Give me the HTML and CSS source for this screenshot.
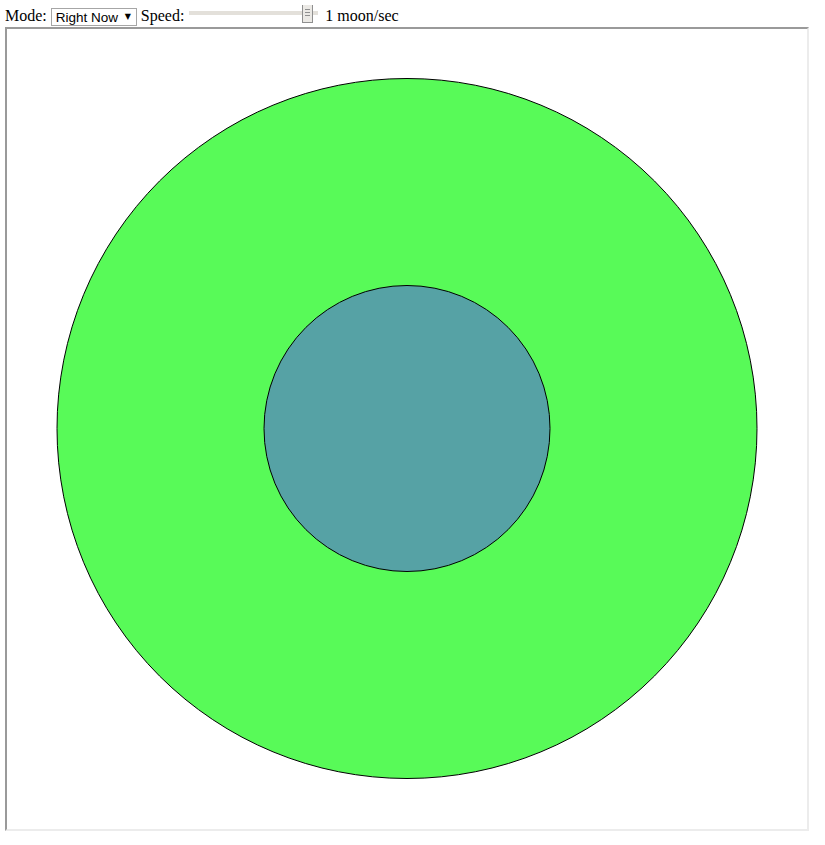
FILE: index.html
```html
<!DOCTYPE html>
<html>
<head>
<meta charset="utf-8">
<link rel="stylesheet" href="styles.css">
</head>
<body>
<div class="controls">
  <span class="label">Mode:</span>
  <span class="select-wrap">
    <select class="mode"><option>Right Now</option></select>
    <span class="arrow">▼</span>
  </span>
  <span class="label">Speed:</span>
  <span class="slider">
    <span class="track"></span>
    <span class="thumb"><i></i><i></i><i></i></span>
  </span>
  <span class="label rate">1 moon/sec</span>
</div>
<div class="stage">
  <svg width="800" height="800" viewBox="0 0 800 800">
    <circle cx="400" cy="399.5" r="350" fill="#58fa58" stroke="#000" stroke-width="1"/>
    <circle cx="400" cy="399.5" r="143" fill="#56a2a5" stroke="#000" stroke-width="1"/>
  </svg>
</div>
</body>
</html>
```
FILE: styles.css
```css
html, body { background: #fff; }
body {
  margin: 5px;
  font-family: "Liberation Serif", "Times New Roman", serif;
  font-size: 16px;
  color: #000;
}
.controls {
  display: flex;
  align-items: center;
  height: 22px;
}
.label { line-height: 22px; }
.select-wrap {
  position: relative;
  display: inline-block;
  margin-left: 4px;
  margin-right: 4px;
  height: 18px;
  margin-top: 2px;
}
.mode {
  appearance: none;
  -webkit-appearance: none;
  width: 86px;
  height: 18px;
  border: 1px solid #a6a6a6;
  border-radius: 0;
  background: #fff;
  font-family: "Liberation Sans", Arial, sans-serif;
  font-size: 13.5px;
  padding: 1px 0 0 4px;
  margin: 0;
  color: #000;
  display: block;
}
.arrow {
  position: absolute;
  right: 6px;
  top: 3px;
  font-size: 8px;
  line-height: 12px;
  font-family: "DejaVu Sans", sans-serif;
  pointer-events: none;
}
.slider {
  position: relative;
  display: inline-block;
  width: 129px;
  height: 22px;
  margin-left: 5px;
  margin-right: 7px;
}
.track {
  position: absolute;
  left: 0;
  right: 0;
  top: 6px;
  height: 4px;
  background: #e3e0da;
}
.thumb {
  position: absolute;
  left: 113px;
  top: -3px;
  width: 9px;
  height: 19px;
  border: 1px solid #8f8f8f;
  background: #ebe9e5;
  display: flex;
  flex-direction: column;
  justify-content: center;
  align-items: center;
  gap: 2px;
}
.thumb i {
  display: block;
  width: 5px;
  height: 1px;
  background: #8f8f8f;
}
.stage {
  width: 800px;
  height: 800px;
  border-style: solid;
  border-width: 2px;
  border-top-color: #9a9a9a;
  border-left-color: #9a9a9a;
  border-right-color: #ececec;
  border-bottom-color: #ececec;
}
.stage svg { display: block; }
```
